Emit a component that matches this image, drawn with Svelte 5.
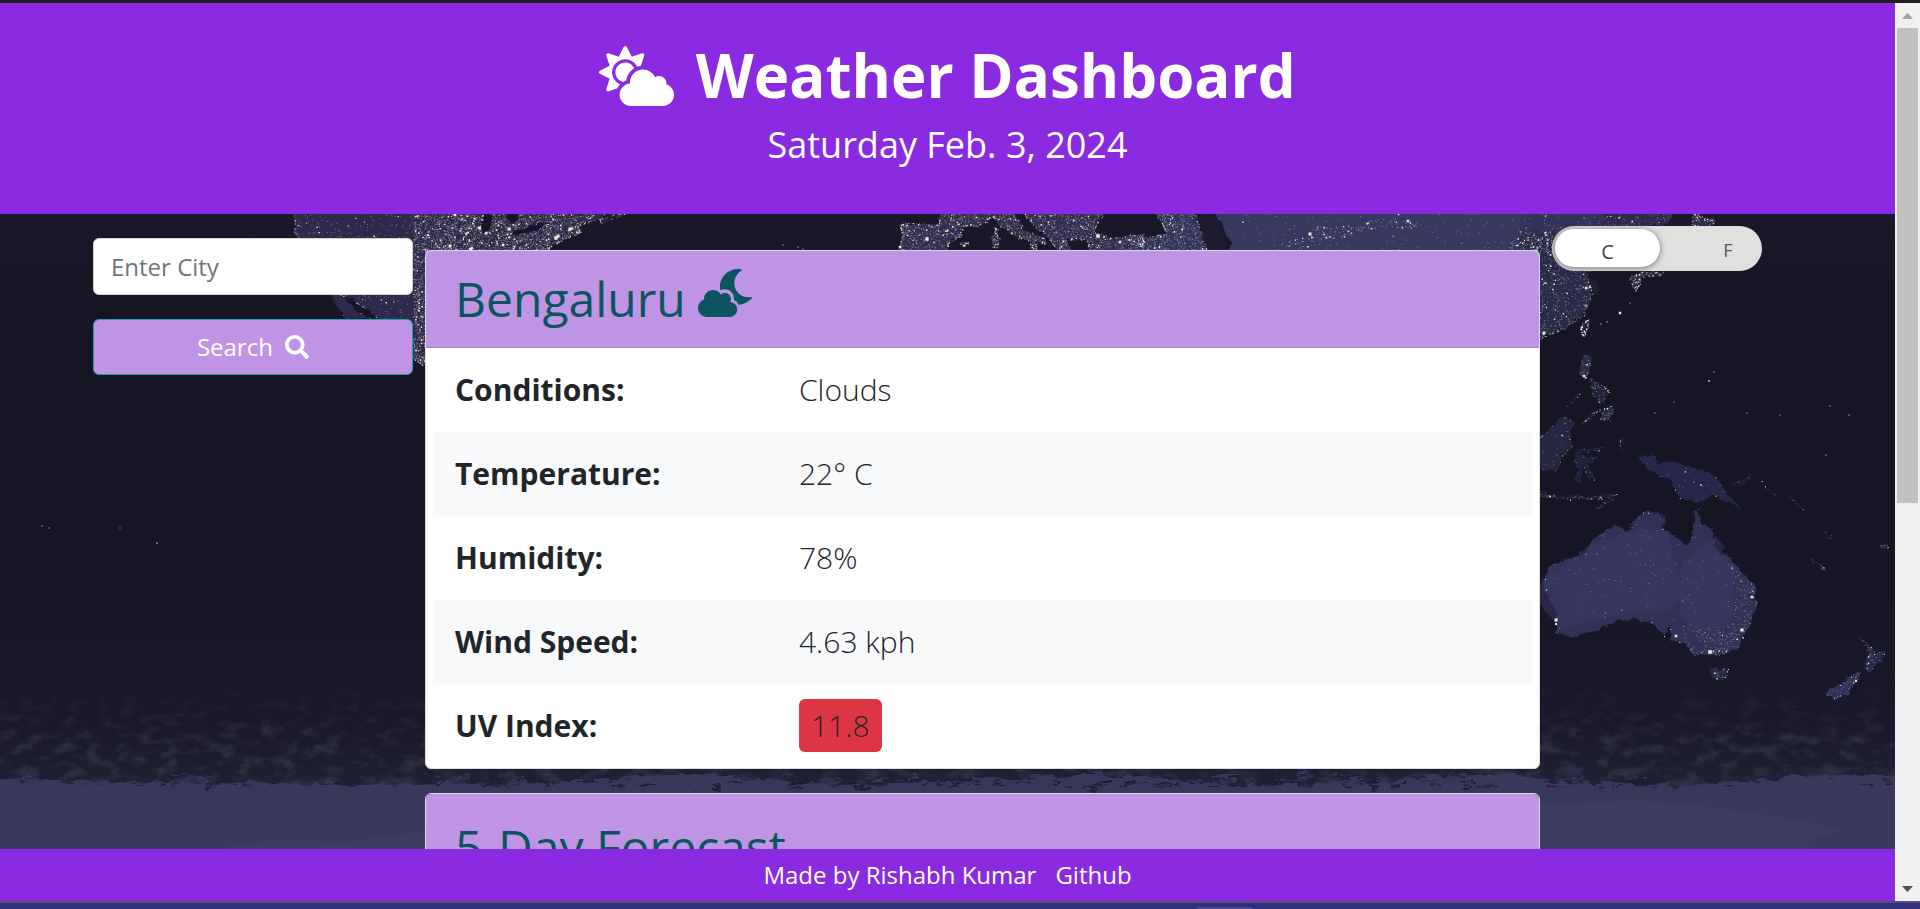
<script>
  const rows = [
    { label: 'Conditions:', value: 'Clouds' },
    { label: 'Temperature:', value: '22° C' },
    { label: 'Humidity:', value: '78%' },
    { label: 'Wind Speed:', value: '4.63 kph' },
    { label: 'UV Index:', value: '11.8', badge: true }
  ];

  // Small deterministic generator so the city lights never move between renders.
  let seed = 7331;
  function rnd() {
    seed = (seed * 1664525 + 1013904223) >>> 0;
    return seed / 4294967296;
  }

  // Coastlines are stored at three units per pixel, relative to an origin.
  const regions = [
    { o: [280, 212], c: '#2d2c4c', n: 900, b: 60, e: 160, p: '40,-20 45,60 80,130 190,250 260,290 320,340 400,440 440,465 440,200 790,118 850,80 900,60 890,40 960,20 1000,-20' },
    { o: [280, 212], c: '#2d2c4c', n: 2600, b: 260, e: 60, p: '400,-20 400,440 440,465 440,118 790,118 850,80 900,60 890,40 940,10 900,-20' },
    { o: [280, 212], c: '#2d2c4c', n: 0, b: 0, e: 8, p: '150,235 190,250 235,300 275,322 200,322 165,275' },
    { o: [280, 212], c: '#24233b', n: 0, b: 0, e: 26, p: '960,22 1000,8 1035,5 1000,20 965,34' },
    { o: [700, 212], c: '#302f50', n: 560, b: 50, e: 130, p: '600,40 620,32 715,38 728,-20 950,-20 940,18 910,26 880,16 830,42 790,40 780,70 740,95 745,120 592,120 608,70' },
    { o: [700, 212], c: '#302f50', n: 110, b: 12, e: 60, p: '880,12 950,14 975,55 1030,80 1035,95 1005,84 1010,112 995,108 990,85 950,75 905,45' },
    { o: [700, 212], c: '#302f50', n: 30, b: 5, e: 26, p: '882,45 892,50 890,72 897,80 893,104 876,104 875,80 882,70' },
    { o: [700, 212], c: '#302f50', n: 6, b: 4, e: 10, p: '780,95 800,88 808,96 790,100' },
    { o: [700, 212], c: '#302f50', n: 720, b: 55, e: 80, p: '955,-20 1000,40 1050,80 1070,120 1110,120 1100,85 1160,80 1170,120 1330,120 1330,65 1240,78 1180,60 1200,20 1240,-20' },
    { o: [1130, 212], c: '#32315a', n: 560, b: 40, e: 90, p: '0,66 50,76 110,66 100,40 60,-20 190,-20 215,60 245,80 225,120 0,120' },
    { o: [1130, 212], c: '#38375f', n: 130, b: 12, e: 0, p: '245,-20 1290,-20 1290,120 300,120 300,90 280,50' },
    { o: [1130, 212], c: '#38375f', n: 150, b: 30, e: 0, p: '440,118 460,90 540,70 560,42 680,38 720,18 880,30 870,48 720,50 620,80 520,110' },
    { o: [1130, 212], c: '#33325a', n: 130, b: 26, e: 0, p: '1130,120 1135,90 1180,70 1290,80 1290,120' },
    { o: [1520, 210], c: '#343358', n: 90, b: 12, e: 0, p: '0,-20 480,-20 440,40 330,55 240,60 0,70' },
    { o: [1520, 210], c: '#2c2b49', n: 760, b: 75, e: 110, p: '0,70 240,60 330,55 240,150 200,190 215,250 195,310 130,355 60,385 0,385' },
    { o: [1520, 210], c: '#2d2c4c', n: 70, b: 10, e: 0, p: '240,-10 460,-10 430,46 250,46' },
    { o: [1520, 210], c: '#2d2c4c', n: 35, b: 12, e: 40, p: '330,200 365,186 430,184 420,196 370,200 360,215 347,244 335,225' },
    { o: [1520, 210], c: '#2d2c4c', n: 40, b: 9, e: 25, p: '520,5 540,20 585,30 575,45 515,48' },
    { o: [1520, 210], c: '#24233d', n: 8, b: 8, e: 44, p: '205,328 188,338 180,358 190,380 203,352' },
    { o: [1520, 210], c: '#2b2a49', n: 14, b: 2, e: 10, p: '190,435 215,440 205,480 197,510 176,485' },
    { o: [1520, 210], c: '#23223b', n: 30, b: 3, e: 8, p: '205,500 225,505 250,530 264,534 264,556 240,580 220,560' },
    { o: [1520, 210], c: '#2b2a49', n: 14, b: 1, e: 8, p: '245,600 275,585 278,610 265,636 243,625' },
    { o: [1520, 210], c: '#23223b', n: 0, b: 0, e: 4, p: '128,600 155,572 178,548 172,562 150,580' },
    { o: [1520, 210], c: '#23223b', n: 0, b: 0, e: 14, p: '182,640 210,615 240,598 215,622' },
    { o: [1520, 210], c: '#272641', n: 30, b: 2, e: 18, p: '0,710 60,680 130,618 165,640 145,680 155,715 130,730 110,785 70,780 0,760' },
    { o: [1520, 210], c: '#23223b', n: 10, b: 0, e: 10, p: '175,713 215,718 260,703 235,724 190,726 185,740 230,740 205,760 225,805 207,810 190,765 180,817 165,808 172,770 160,755' },
    { o: [1520, 210], c: '#201f35', n: 0, b: 0, e: 3, p: '300,690 315,688 305,712 317,735 298,715' },
    { o: [1520, 210], c: '#28274a', n: 14, b: 2, e: 10, p: '355,740 400,738 415,768 460,752 580,795 610,840 665,897 610,875 580,850 540,875 480,865 450,810 380,780' },
    { o: [1520, 210], c: '#201f35', n: 0, b: 0, e: 3, p: '625,820 670,812 690,795 697,802 675,822 640,828' },
    { o: [1520, 210], c: '#201f35', n: 0, b: 0, e: 3, p: '720,805 740,830 770,856 742,842' },
    { o: [1520, 210], c: '#201f35', n: 0, b: 0, e: 3, p: '800,850 850,898 830,890' },
    { o: [1520, 210], c: '#23223b', n: 20, b: 3, e: 18, p: '55,840 110,858 200,860 290,852 270,866 150,868 60,860' },
    { o: [1520, 210], c: '#26253f', n: 0, b: 0, e: 5, p: '232,888 290,862 270,876 236,897' },
    { o: [1520, 490], c: '#313056', n: 110, b: 3, e: 26, p: '75,250 90,228 120,212 195,195 212,155 285,105 322,125 350,80 375,65 440,78 428,120 500,165 515,140 522,60 532,55 548,104 575,118 590,180 640,210 700,285 710,340 690,400 650,475 600,495 520,495 490,460 450,450 458,405 430,438 390,395 330,385 270,400 240,420 150,440 105,430 110,390 95,345 72,300' },
    { o: [1520, 490], c: '#313056', n: 150, b: 10, e: 0, p: '620,210 700,285 710,340 690,400 650,475 600,495 560,490 580,430 640,380 650,290' },
    { o: [1520, 490], c: '#313056', n: 60, b: 3, e: 0, p: '490,400 600,420 620,490 520,495 485,450' },
    { o: [1520, 490], c: '#2a2948', n: 12, b: 1, e: 10, p: '568,530 600,540 622,535 615,565 600,572 580,560' },
    { o: [1520, 490], c: '#2b2a4a', n: 18, b: 4, e: 14, p: '1010,432 1045,465 1065,490 1100,483 1080,515 1045,545 1033,515 1050,490' },
    { o: [1520, 490], c: '#32315a', n: 22, b: 2, e: 8, p: '1030,542 985,610 940,624 918,612 970,575 1010,545' },
    { o: [1520, 490], c: '#23223d', n: 0, b: 0, e: 8, p: '873,205 910,230 914,242 890,225' },
    { o: [1520, 490], c: '#201f35', n: 0, b: 0, e: 3, p: '912,120 930,135 942,160 928,142' },
    { o: [1520, 490], c: '#2a2948', n: 0, b: 0, e: 6, p: '1082,165 1100,163 1103,175 1086,176' }
  ];

  function inside(x, y, pts) {
    let hit = false;
    for (let i = 0, j = pts.length - 1; i < pts.length; j = i++) {
      const [xi, yi] = pts[i];
      const [xj, yj] = pts[j];
      if (yi > y !== yj > y && x < ((xj - xi) * (y - yi)) / (yj - yi) + xi) hit = !hit;
    }
    return hit;
  }

  const dot = (x, y, s) => `M${x.toFixed(1)} ${y.toFixed(1)}h${s}v${s}h-${s}z`;

  let faint = '';
  let bright = '';
  const lands = regions.map((r) => {
    const pts = r.p.split(' ').map((s) => {
      const [x, y] = s.split(',').map(Number);
      return [r.o[0] + x / 3, r.o[1] + y / 3];
    });
    const xs = pts.map((q) => q[0]);
    const ys = pts.map((q) => q[1]);
    const x0 = Math.min(...xs), x1 = Math.max(...xs);
    const y0 = Math.min(...ys), y1 = Math.max(...ys);
    let made = 0;
    let tries = 0;
    while (made < r.n + r.b && tries++ < 20000) {
      const x = x0 + rnd() * (x1 - x0);
      const y = y0 + rnd() * (y1 - y0);
      if (!inside(x, y, pts)) continue;
      if (made < r.n) faint += dot(x, y, 0.8);
      else bright += dot(x, y, 0.8 + rnd() * 0.9);
      made++;
    }
    for (let i = 0; i < r.e; i++) {
      const k = Math.floor(rnd() * pts.length);
      const a = pts[k];
      const b = pts[(k + 1) % pts.length];
      const t = rnd();
      const x = a[0] + (b[0] - a[0]) * t + (rnd() - 0.5) * 1.6;
      const y = a[1] + (b[1] - a[1]) * t + (rnd() - 0.5) * 1.6;
      if (rnd() < 0.35) bright += dot(x, y, 1);
      else faint += dot(x, y, 0.9);
    }
    return { fill: r.c, points: pts.map((q) => q.join(',')).join(' ') };
  });

  // Isolated cities and islands: x, y, size
  const cities = [
    [480, 228, 3.2], [509, 229, 3], [486, 233, 3], [450, 246, 3], [471, 249, 3], [503, 245, 2.6], [556, 238, 3.4], [570, 229, 3], [558, 236, 3], [455, 215, 2.6],
    [927, 239, 3.4], [900, 247, 2.4], [1098, 236, 3.6], [1120, 242, 2.4], [1209, 239, 3], [1310, 234, 3], [1408, 221, 2.6], [1544, 333, 3], [1586, 288, 2.4], [1620, 313, 2.4],
    [1752, 597, 2.6], [1742, 630, 3.2], [1710, 652, 3.6], [1676, 636, 2.6], [1556, 620, 3], [1556, 624, 2], [1584, 376, 2.6], [1701, 485, 1.6], [1856, 681, 1.8],
    [1709, 381, 1.6], [1714, 372, 1.2], [1830, 406, 1.2], [1849, 415, 1.2], [1780, 415, 0.9], [1747, 413, 0.9], [1826, 455, 1.1], [1655, 413, 0.9], [1674, 402, 0.8],
    [42, 526, 1.2], [49, 528, 1], [157, 543, 1.3], [120, 528, 0.8], [783, 245, 1], [798, 247, 1.2], [803, 249, 1], [1601, 324, 1.2], [1607, 322, 1.2], [1630, 303, 1]
  ];
  for (const [x, y, s] of cities) bright += dot(x - s / 2, y - s / 2, s);

  // Ragged edge of the southern ice.
  let ice = 'M-20 870V780';
  let level = 780;
  for (let x = -20; x <= 1916; x += 2) {
    const base = x < 210 ? 779 + x * 0.024 : x < 460 ? 784 : 780 + 5 * Math.sin(x / 62);
    level += (base - level) * 0.16 + (rnd() - 0.5) * 2;
    ice += `L${x} ${level.toFixed(1)}`;
  }
  ice += 'V870z';

  const streaks = [];
  for (let i = 0; i < 260; i++) {
    const x = rnd() * 1895;
    const wild = (x > 420 && x < 1640) || x > 1840 || (x > 120 && x < 215);
    if (!wild) continue;
    const up = rnd();
    streaks.push({
      x,
      y: (up < 0.5 ? 774 : 780) + rnd() * 7,
      w: 3 + rnd() * 13,
      h: 0.8 + rnd() * 1.6,
      c: up < 0.5 ? '#38375a' : '#1e1e30'
    });
  }
</script>

<div class="screen">
  <div class="top-edge"></div>
  <div class="viewport">
    <div class="page">
      <header>
        <h1>
          <svg class="fa sun" viewBox="0 0 640 512" aria-hidden="true">
            <path fill="currentColor" d="M575.2 325.7c.2-1.9.8-3.7.8-5.6 0-35.3-28.7-64-64-64-12.6 0-24.2 3.8-34.1 10-17.6-38.8-56.5-66-101.9-66-61.8 0-112 50.1-112 112 0 3 .7 5.8.9 8.7-49.6 3.7-88.9 44.7-88.9 95.3 0 53 43 96 96 96h272c53 0 96-43 96-96 0-42.1-27.2-77.4-64.8-90.4zm-430.4-22.6c-43.7-43.7-43.7-114.7 0-158.3 43.7-43.7 114.7-43.7 158.4 0 9.7 9.7 16.9 20.9 22.3 32.7 9.8-3.7 20.1-6 30.7-7.5L386 81.1c4-11.9-7.3-23.1-19.2-19.2L279 91.2 237.5 8.4C232-2.8 216-2.8 210.4 8.4L169 91.2 81.1 61.9C69.3 58 58 69.3 61.9 81.1l29.3 87.8-82.8 41.5c-11.2 5.6-11.2 21.5 0 27.1l82.8 41.4-29.3 87.8c-4 11.9 7.3 23.1 19.2 19.2l76.1-25.3c6.1-12.4 14-23.7 23.6-33.5-13.1-5.4-25.4-13.4-36-24zm-4.8-79.2c0 40.8 29.3 74.8 67.9 82.3 8-4.7 16.3-8.8 25.2-11.7 5.4-44.3 31-82.5 67.4-105C287.3 160.4 258 140 224 140c-46.3 0-84 37.6-84 83.9z" />
          </svg>
          <span>Weather Dashboard</span>
        </h1>
        <h4>Saturday Feb. 3, 2024</h4>
      </header>

      <main>
        <svg class="map" viewBox="0 214 1895 635" aria-hidden="true">
          <defs>
            <linearGradient id="sea" x1="0" y1="0" x2="0" y2="1">
              <stop offset="0" stop-color="#1a192b" />
              <stop offset="0.14" stop-color="#161523" />
              <stop offset="0.55" stop-color="#161523" />
              <stop offset="0.8" stop-color="#1a192b" />
              <stop offset="0.88" stop-color="#1f1f32" />
              <stop offset="1" stop-color="#1f1f32" />
            </linearGradient>
            <linearGradient id="fade" x1="0" y1="0" x2="0" y2="1">
              <stop offset="0" stop-color="#000" />
              <stop offset="0.6" stop-color="#fff" />
            </linearGradient>
            <mask id="haze" maskUnits="userSpaceOnUse" x="0" y="680" width="1895" height="110">
              <rect x="0" y="680" width="1895" height="110" fill="url(#fade)" />
            </mask>
            <filter id="rough" x="-5%" y="-5%" width="110%" height="110%">
              <feTurbulence type="fractalNoise" baseFrequency="0.12" numOctaves="3" seed="4" result="n" />
              <feDisplacementMap in="SourceGraphic" in2="n" scale="7" xChannelSelector="R" yChannelSelector="G" />
            </filter>
            <filter id="shore" x="-2%" y="-20%" width="104%" height="140%">
              <feTurbulence type="fractalNoise" baseFrequency="0.05 0.16" numOctaves="4" seed="9" result="n" />
              <feDisplacementMap in="SourceGraphic" in2="n" scale="13" xChannelSelector="R" yChannelSelector="G" />
            </filter>
            <filter id="mottle" x="0" y="0" width="100%" height="100%">
              <feTurbulence type="fractalNoise" baseFrequency="0.05 0.09" numOctaves="4" seed="2" />
              <feColorMatrix values="0 0 0 0 .19  0 0 0 0 .2  0 0 0 0 .3  1.6 0 0 0 -.72" />
            </filter>
          </defs>
          <rect x="0" y="214" width="1895" height="635" fill="url(#sea)" />
          <g mask="url(#haze)">
            <rect x="0" y="680" width="1895" height="110" filter="url(#mottle)" opacity="0.35" />
          </g>
          <g filter="url(#rough)">
            {#each lands as land}
              <polygon points={land.points} fill={land.fill} />
            {/each}
            <path fill="#3b3a64" opacity=".5" d="M1590 545l50-17 28 4 14 60-12 20-50 2-60 16-30-40zM1682 560l34-24 20 34-4 50-30 20-24-26z" />
            <path fill="#282743" d="M1585 275l10 6 6 14-12-6z" opacity=".5" />
          </g>
          <path fill="#f2efd2" opacity=".5" d={faint} />
          <path fill="#fffbe6" opacity=".93" d={bright} />
          <g filter="url(#rough)">
            <path fill="#191829" d="M485 212l8 4-3 13-7 5-3-8zM506 212l12 2-4 11-6-1zM512 233l20-8 18-4-12 8-24 7z" />
            <path fill="#1b1a2d" d="M1198 208l18 9 9 20 5 19h-20l-8-18z" />
          </g>
          <g filter="url(#shore)">
            <path fill="#38375a" d={ice} />
            {#each streaks as s}
              <rect x={s.x} y={s.y} width={s.w} height={s.h} fill={s.c} />
            {/each}
          </g>
          <path fill="#3d3c62" opacity=".8" d="M1540 804l100-4 70 7 90 13 46 10-30 7-14 12h-262z" />
          <path fill="#3d3c62" opacity=".8" d="M230 846l45-7 70 3 60-8 20-4v20H220z" />
        </svg>

        <div class="content">
          <form class="search" onsubmit={(e) => e.preventDefault()}>
            <input type="text" placeholder="Enter City" />
            <button type="submit">
              Search
              <svg class="fa" viewBox="0 0 512 512" aria-hidden="true">
                <path fill="currentColor" d="M505 442.7L405.3 343c-4.5-4.5-10.6-7-17-7H372c27.6-35.3 44-79.7 44-128C416 93.1 322.9 0 208 0S0 93.1 0 208s93.1 208 208 208c48.3 0 92.7-16.4 128-44v16.3c0 6.4 2.5 12.5 7 17l99.7 99.7c9.4 9.4 24.6 9.4 33.9 0l28.3-28.3c9.4-9.4 9.4-24.6.1-34zM208 336c-70.7 0-128-57.2-128-128 0-70.7 57.2-128 128-128 70.7 0 128 57.2 128 128 0 70.7-57.2 128-128 128z" />
              </svg>
            </button>
          </form>

          <div class="cards">
            <section class="card">
              <h2>
                Bengaluru
                <svg class="fa moon" viewBox="0 0 576 512" aria-hidden="true">
                  <path fill="currentColor" d="M342.8 352.7c5.7-9.6 9.2-20.7 9.2-32.7 0-35.3-28.7-64-64-64-17.2 0-32.8 6.9-44.3 17.9-16.3-29.6-47.5-49.9-83.7-49.9-53 0-96 43-96 96 0 2 .5 3.8.6 5.7C27.1 338.8 0 374.1 0 416c0 53 43 96 96 96h240c46 0 82-35 82-80 0-43-32-76-75.2-79.3zM565.2 298.4C472.1 316.1 386.8 244.7 386.8 150.7c0-54.2 29-104 76-130.8 7.3-4.1 5.4-15.1-2.8-16.7C448.4 1.1 436.7 0 425 0 319.1 0 233.1 85.9 233.1 191.9c0 12 1.5 24 4 36 15-8 32-12 50.9-12 53 0 96 43 96 104 0 4-.5 8-1 12 20 8 38 20 48 49 56-2 108-29 143.100-68.300 5.300-6.400-.6-15.800-8.900-14.200z" />
                </svg>
              </h2>
              <div class="table">
                {#each rows as row}
                  <div class="row">
                    <strong>{row.label}</strong>
                    <span class:badge={row.badge}>{row.value}</span>
                  </div>
                {/each}
              </div>
            </section>
            <section class="card forecast">
              <h2>5-Day Forecast</h2>
            </section>
          </div>

          <div class="toggle">
            <span class="on">C</span>
            <span class="off">F</span>
          </div>
        </div>
      </main>

      <footer><span>Made by Rishabh Kumar</span><span>Github</span></footer>
    </div>

    <div class="scrollbar">
      <svg viewBox="0 0 25 25"><path fill="#a3a3a3" d="M7 16h11l-5.500-6z" /></svg>
      <div class="thumb"></div>
      <svg class="down" viewBox="0 0 25 25"><path fill="#505050" d="M7 10h11l-5.500 6z" /></svg>
    </div>
  </div>
  <div class="desk"><div class="tab"></div></div>
</div>

<style>
  :global(body) {
    margin: 0;
    overflow: hidden;
    background: #161523;
  }
  .screen,
  .screen :global(*) {
    box-sizing: border-box;
  }
  .screen {
    width: 1920px;
    height: 909px;
    display: flex;
    flex-direction: column;
    overflow: hidden;
    font-family: 'Open Sans', 'Noto Sans', sans-serif;
    font-size: 24px;
    line-height: 36px;
    color: #212529;
  }
  .top-edge {
    height: 3px;
    background: #202124;
  }
  .viewport {
    height: 898px;
    display: flex;
  }
  .page {
    width: 1895px;
    display: flex;
    flex-direction: column;
  }
  header {
    height: 211px;
    padding-top: 36px;
    background: #8a2be2;
    color: #fff;
    text-align: center;
  }
  h1,
  h2,
  h4 {
    margin: 0;
  }
  h1 {
    font-size: 60px;
    line-height: 72px;
    font-weight: 700;
    white-space: nowrap;
  }
  h4 {
    margin-top: 12px;
    font-size: 36px;
    line-height: 43px;
    font-weight: 400;
  }
  .fa {
    height: 1em;
    width: 1em;
    vertical-align: -0.125em;
    overflow: visible;
  }
  .sun {
    width: 1.25em;
    margin-right: 6px;
  }
  .moon {
    width: 1.125em;
    vertical-align: 0;
  }
  main {
    height: 635px;
    display: grid;
    overflow: hidden;
  }
  .map,
  .content {
    grid-area: 1 / 1;
  }
  .map {
    width: 1895px;
    height: 635px;
  }
  .content {
    z-index: 1;
    height: 635px;
    display: grid;
    grid-template-columns: 320px 1115px 210px;
    column-gap: 12px;
    padding-left: 93px;
    align-items: start;
  }
  .search {
    display: flex;
    flex-direction: column;
    gap: 24px;
    padding-top: 24px;
  }
  input,
  button {
    font: inherit;
    width: 320px;
    border-radius: 6px;
  }
  input {
    height: 57px;
    padding: 0 17px;
    border: 1px solid #ced4da;
    background: #fff;
  }
  input::placeholder {
    color: #6c757d;
    opacity: 1;
  }
  button {
    height: 56px;
    padding: 0;
    border: 1px solid #17a2b8;
    background: #bf94e4;
    color: #fff;
  }
  button .fa {
    margin-left: 6px;
  }
  .cards {
    display: flex;
    flex-direction: column;
    gap: 24px;
    padding-top: 36px;
  }
  .card {
    background: #fff;
    border: 1px solid #dcd9e2;
    border-radius: 6px;
    overflow: hidden;
  }
  .card h2 {
    height: 97px;
    padding: 18px 29px 0;
    background: #bf94e4;
    border-bottom: 1px solid #a783c7;
    color: #0c5460;
    font-size: 48px;
    line-height: 58px;
    font-weight: 400;
  }
  .forecast h2 {
    height: 120px;
    padding-top: 24px;
  }
  .table {
    padding: 0 7px;
  }
  .row {
    height: 84px;
    display: grid;
    grid-template-columns: 344px auto;
    justify-content: start;
    align-items: center;
    padding: 0 0 2px 22px;
    font-size: 30px;
    line-height: 45px;
    font-weight: 300;
  }
  .row:nth-child(even) {
    background: #f8f9fa;
  }
  .row strong {
    font-weight: 700;
  }
  .row .badge {
    height: 53px;
    padding: 4px 12px;
    border-radius: 6px;
    background: #dc3545;
  }
  .toggle {
    width: 210px;
    height: 45px;
    margin-top: 12px;
    padding: 3px;
    display: flex;
    border-radius: 23px;
    background: #e0e0e0;
    overflow: hidden;
    box-shadow: inset 2px 0 1px #c6c6c6;
    color: #444;
    text-align: center;
  }
  .on {
    width: 105px;
    height: 38px;
    border-radius: 19px;
    background: #fff;
    box-shadow: 0 1px 6px rgba(0, 0, 0, 0.5);
    font-size: 20px;
    line-height: 45px;
  }
  .off {
    width: 99px;
    padding-left: 37px;
    font-size: 18px;
    line-height: 43px;
    color: #555;
  }
  footer {
    height: 52px;
    display: flex;
    justify-content: center;
    gap: 19px;
    background: #8a2be2;
    color: #fff;
    line-height: 51px;
  }
  .scrollbar {
    width: 25px;
    background: #f0f0f0;
    display: flex;
    flex-direction: column;
    align-items: center;
  }
  .scrollbar svg {
    width: 25px;
    height: 25px;
  }
  .scrollbar .down {
    margin-top: auto;
  }
  .thumb {
    width: 21px;
    height: 475px;
    background: #c1c1c1;
  }
  .desk {
    height: 8px;
    border-top: 2px solid #55527a;
    background: #302f7c;
    display: flex;
    align-items: flex-end;
    padding-left: 1197px;
  }
  .tab {
    width: 56px;
    height: 2px;
    border-radius: 2px 2px 0 0;
    background: #4b4a87;
  }
</style>
